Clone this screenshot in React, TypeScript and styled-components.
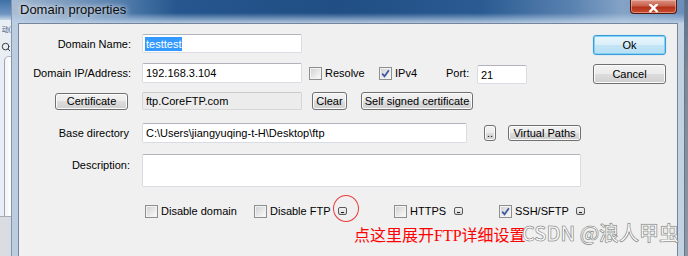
import React from 'react';
import styled, { createGlobalStyle } from 'styled-components';
import { Search } from 'lucide-react';

const GlobalStyle = createGlobalStyle`
  * { box-sizing: border-box; }
  html, body { margin: 0; padding: 0; }
  body {
    width: 688px;
    height: 256px;
    overflow: hidden;
    background: #f0f0f0;
    font-family: "Liberation Sans", Arial, sans-serif;
    font-size: 11px;
    color: #000;
  }
`;

const Screen = styled.div`
  display: flex;
  width: 688px;
  height: 256px;
  overflow: hidden;
`;

/* the window behind the dialog, only a sliver shows on the left */
const Backdrop = styled.div`
  width: 12px;
  flex: none;
  display: flex;
  flex-direction: column;
  background: #e9eef4;
  border-right: 1px solid #8196ae;
  overflow: hidden;
`;

const BackTitle = styled.div`
  height: 20px;
  flex: none;
  background: linear-gradient(#3e70a8, #6f95c0 70%, #c6d6e8);
`;

const BackText = styled.div`
  height: 17px;
  flex: none;
  display: flex;
  justify-content: flex-end;
  align-items: center;
  font-family: "Noto Sans CJK SC", sans-serif;
  font-size: 7px;
  color: #34507a;
  white-space: nowrap;
`;

const BackIcon = styled.div`
  height: 19px;
  flex: none;
  display: flex;
  justify-content: flex-end;
  align-items: center;
  color: #3c3c3c;
`;

const BackPanel = styled.div`
  flex: 1;
  margin-left: 4px;
  border-left: 1px solid #9aa7b6;
  border-top: 1px solid #b0bac6;
  border-top-left-radius: 5px;
  background: linear-gradient(to right, #f4f4f4, #ffffff);
`;

const BackFooter = styled.div`
  height: 40px;
  flex: none;
  background: #d9dde2;
  border-top: 1px solid #a6adb6;
`;

const EdgeStrip = styled.div`
  width: 4px;
  flex: none;
  background: linear-gradient(#55708f, #7c8998 30%, #8a97a6);
  border-left: 1px solid #6b7787;
`;

const Window = styled.div`
  flex: 1;
  display: flex;
  flex-direction: column;
  background: linear-gradient(to right, #bccde0, #c8d6e6 50%, #c3d2e3);
`;

const TitleBar = styled.div`
  height: 23px;
  flex: none;
  display: flex;
  align-items: flex-start;
  padding-left: 8px;
  background:
    linear-gradient(to bottom, rgba(190, 210, 232, 0) 0, rgba(190, 210, 232, 0) 13px, rgba(190, 210, 232, 0.9) 23px),
    linear-gradient(to right, #a9bdd3 0, #8da8c7 30px, #4d79a9 115px, #25568d 165px, #204e85 330px, #2a5b92 470px, #5a82b0 560px, #84a3c6 610px, #6a8eba 672px);
`;

const TitleText = styled.div`
  padding-top: 2px;
  font-size: 13px;
  line-height: 15px;
  color: #0c0c0c;
  text-shadow: 0 0 5px rgba(255, 255, 255, 0.9), 0 0 9px rgba(255, 255, 255, 0.7);
`;

const CloseButton = styled.div`
  margin-left: auto;
  margin-right: 7px;
  width: 47px;
  height: 14px;
  display: flex;
  justify-content: center;
  align-items: flex-end;
  border: 1px solid #4e1a12;
  border-top: none;
  border-radius: 0 0 4px 4px;
  background: linear-gradient(#d99385, #c9614b 45%, #b3321b 55%, #c84d30);
  box-shadow: inset 0 0 0 1px rgba(255, 200, 190, 0.5);
`;

const Client = styled.div`
  flex: 1;
  margin: 0 6px;
  display: flex;
  position: relative;
  background: #f0f0f0;
  border: 1px solid #77859a;
  border-bottom: none;
`;

const Main = styled.div`
  flex: 1;
  display: flex;
  flex-direction: column;
  padding-top: 10px;
`;

const Side = styled.div`
  width: 73px;
  flex: none;
  margin-right: 11px;
  padding-top: 11px;
  display: flex;
  flex-direction: column;
  gap: 9px;
`;

const FieldRow = styled.div<{ $mt: number; $h: number }>`
  display: flex;
  align-items: center;
  margin-top: ${(p) => p.$mt}px;
  height: ${(p) => p.$h}px;
  white-space: nowrap;
`;

const LabelCell = styled.div<{ $pr?: number; $top?: boolean }>`
  width: 112px;
  flex: none;
  margin-right: 11px;
  padding-right: ${(p) => p.$pr ?? 0}px;
  display: flex;
  justify-content: flex-end;
  align-self: ${(p) => (p.$top ? 'flex-start' : 'center')};
  padding-top: ${(p) => (p.$top ? 5 : 0)}px;
`;

const TextBox = styled.div<{ $w: number; $h?: number; $ml?: number; $mt?: number; $readOnly?: boolean }>`
  width: ${(p) => p.$w}px;
  height: ${(p) => (p.$h ? `${p.$h}px` : '100%')};
  margin-left: ${(p) => p.$ml ?? 0}px;
  align-self: ${(p) => (p.$mt !== undefined ? 'flex-start' : 'center')};
  margin-top: ${(p) => p.$mt ?? 0}px;
  flex: none;
  display: flex;
  align-items: center;
  padding-left: 3px;
  background: ${(p) => (p.$readOnly ? '#ececec' : '#ffffff')};
  border: 1px solid ${(p) => (p.$readOnly ? '#d6d6d6' : '#d9dce2')};
  border-top-color: ${(p) => (p.$readOnly ? '#cacaca' : '#b1b4ba')};
  border-radius: 2px;
  overflow: hidden;
`;

const TextArea = styled(TextBox)`
  align-self: flex-start;
`;

const Selection = styled.span`
  background: #3399ff;
  color: #ffffff;
  padding: 1px 1px;
  margin-left: -1px;
`;

const Button = styled.div<{ $w: number; $h: number; $ml?: number; $default?: boolean }>`
  width: ${(p) => p.$w}px;
  height: ${(p) => p.$h}px;
  margin-left: ${(p) => p.$ml ?? 0}px;
  flex: none;
  display: flex;
  justify-content: center;
  align-items: center;
  border: 1px solid ${(p) => (p.$default ? '#3c9ad8' : '#707070')};
  border-radius: 3px;
  background: ${(p) =>
    p.$default
      ? 'linear-gradient(#e8f5fc, #d9effa 50%, #c3e5f6 50%, #b8dff3)'
      : 'linear-gradient(#f2f2f2, #ebebeb 50%, #dddddd 50%, #cfcfcf)'};
  box-shadow: ${(p) =>
    p.$default ? 'inset 0 0 0 1px #7fd3f7, 0 0 1px #6cc2ee' : 'inset 0 0 0 1px #fbfbfb'};
  color: #000;
  font-size: 11px;
  white-space: nowrap;
`;

const Option = styled.div<{ $w?: number; $ml?: number }>`
  width: ${(p) => (p.$w ? `${p.$w}px` : 'auto')};
  margin-left: ${(p) => p.$ml ?? 0}px;
  flex: none;
  display: flex;
  align-items: center;
  gap: 3px;
  white-space: nowrap;
`;

const Box = styled.span`
  width: 13px;
  height: 13px;
  flex: none;
  display: flex;
  justify-content: center;
  align-items: center;
  border: 1px solid #8e8f8f;
  background: linear-gradient(135deg, #cfcfcf, #f4f4f4 80%);
  box-shadow: inset 0 0 0 1px #f2f2f2;
`;

const PortLabel = styled.span`
  width: 31px;
  flex: none;
`;

const OptionsRow = styled.div`
  display: flex;
  align-items: center;
  margin-top: 16px;
  height: 16px;
  padding-left: 126px;
`;

const Expander = styled.span`
  position: relative;
  width: 9px;
  height: 8px;
  flex: none;
  border: 1px solid #5a5a5a;
  border-radius: 2px;
  background: linear-gradient(#f4f4f4, #d6d6d6);

  &::after {
    content: '';
    position: absolute;
    left: 2px;
    bottom: 1px;
    width: 3px;
    height: 1px;
    background: #222;
  }
`;

const Circle = styled.span`
  position: absolute;
  left: -6px;
  top: -13px;
  width: 26px;
  height: 27px;
  border: 1px solid #ec3b3b;
  border-radius: 50%;
`;

const Annotation = styled.div`
  margin-top: 8px;
  padding-left: 335px;
  font-family: "Liberation Serif", "Noto Sans CJK SC", serif;
  font-size: 16px;
  line-height: 18px;
  color: #ff0000;
  white-space: nowrap;
`;

const Watermark = styled.div`
  position: absolute;
  left: 503px;
  top: 199px;
  font-family: "Noto Sans CJK SC", sans-serif;
  font-size: 20px;
  line-height: 20px;
  font-weight: 500;
  color: rgba(255, 255, 255, 0.95);
  -webkit-text-stroke: 0.5px rgba(105, 105, 105, 0.9);
  text-shadow: 0 0 1px rgba(90, 90, 90, 0.6);
  white-space: nowrap;
`;

const CheckMark = () => (
  <svg width="9" height="9" viewBox="0 0 9 9">
    <path d="M1.2 4.6 L3.5 7.3 L7.9 1.2" fill="none" stroke="#3d57a0" strokeWidth="1.7" />
  </svg>
);

const CheckOption: React.FC<{ label: string; checked?: boolean; w?: number; ml?: number }> = ({
  label,
  checked,
  w,
  ml,
}) => (
  <Option $w={w} $ml={ml}>
    <Box>{checked && <CheckMark />}</Box>
    <span>{label}</span>
  </Option>
);

const App: React.FC = () => (
  <>
    <GlobalStyle />
    <Screen>
      <Backdrop>
        <BackTitle />
        <BackText>动(</BackText>
        <BackIcon>
          <Search size={10} strokeWidth={2.4} />
        </BackIcon>
        <BackPanel />
        <BackFooter />
      </Backdrop>

      <Window>
        <TitleBar>
          <TitleText>Domain properties</TitleText>
          <CloseButton>
            <svg width="13" height="9" viewBox="0 0 13 9">
              <path d="M2.5 0 L10.5 8 M10.5 0 L2.5 8" stroke="#ffffff" strokeWidth="2.4" />
            </svg>
          </CloseButton>
        </TitleBar>

        <Client>
          <Main>
            <FieldRow $mt={0} $h={19}>
              <LabelCell>Domain Name:</LabelCell>
              <TextBox $w={160}>
                <Selection>testtest</Selection>
              </TextBox>
            </FieldRow>

            <FieldRow $mt={10} $h={20}>
              <LabelCell>Domain IP/Address:</LabelCell>
              <TextBox $w={160}>192.168.3.104</TextBox>
              <CheckOption label="Resolve" w={70} ml={7} />
              <CheckOption label="IPv4" checked w={67} />
              <PortLabel>Port:</PortLabel>
              <TextBox $w={50} $h={19} $mt={2}>
                21
              </TextBox>
            </FieldRow>

            <FieldRow $mt={9} $h={18}>
              <LabelCell $pr={3}>
                <Button $w={73} $h={17}>
                  Certificate
                </Button>
              </LabelCell>
              <TextBox $w={160} $readOnly>
                ftp.CoreFTP.com
              </TextBox>
              <Button $w={35} $h={18} $ml={10}>
                Clear
              </Button>
              <Button $w={112} $h={18} $ml={14}>
                Self signed certificate
              </Button>
            </FieldRow>

            <FieldRow $mt={13} $h={20}>
              <LabelCell $pr={2}>Base directory</LabelCell>
              <TextBox $w={325}>C:\Users\jiangyuqing-t-H\Desktop\ftp</TextBox>
              <Button $w={12} $h={16} $ml={17}>
                ..
              </Button>
              <Button $w={73} $h={16} $ml={12}>
                Virtual Paths
              </Button>
            </FieldRow>

            <FieldRow $mt={11} $h={33}>
              <LabelCell $pr={1} $top>
                Description:
              </LabelCell>
              <TextArea $w={439} />
            </FieldRow>

            <OptionsRow>
              <CheckOption label="Disable domain" w={109} />
              <CheckOption label="Disable FTP" w={84} />
              <Expander>
                <Circle />
              </Expander>
              <CheckOption label="HTTPS" w={60} ml={47} />
              <Expander />
              <CheckOption label="SSH/SFTP" checked w={77} ml={36} />
              <Expander />
            </OptionsRow>

            <Annotation>点这里展开FTP详细设置</Annotation>
          </Main>

          <Side>
            <Button $w={73} $h={20} $default>
              Ok
            </Button>
            <Button $w={73} $h={20}>
              Cancel
            </Button>
          </Side>

          <Watermark>CSDN @浪人甲虫</Watermark>
        </Client>
      </Window>

      <EdgeStrip />
    </Screen>
  </>
);

export default App;
